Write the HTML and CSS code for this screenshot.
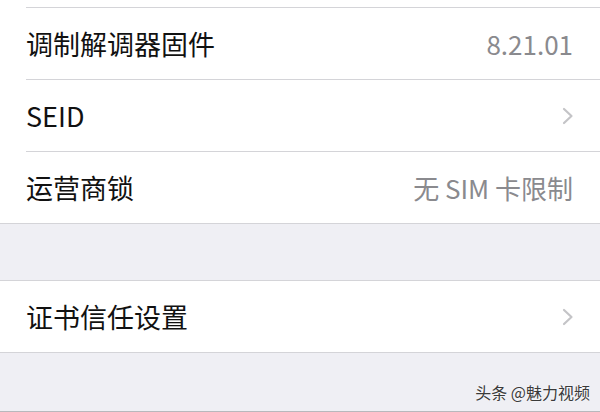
FILE: index.html
```html
<!DOCTYPE html>
<html lang="zh-CN">
<head>
    <meta charset="UTF-8">
    <meta name="viewport" content="width=device-width, initial-scale=1.0">
    <title>关于本机</title>
    <link rel="stylesheet" href="styles.css">
</head>
<body>
    <div class="group">
        <div class="row">
            <div class="cell cell-top"></div>
        </div>
        <div class="row">
            <div class="cell">
                <span class="label">调制解调器固件</span>
                <span class="value">8.21.01</span>
            </div>
        </div>
        <div class="row">
            <div class="cell">
                <span class="label">SEID</span>
                <svg class="chevron" width="12" height="18" viewBox="0 0 12 18">
                    <path d="M2 2 L9.5 9 L2 16" fill="none" stroke="#c4c4c7" stroke-width="2.2" stroke-linecap="round" stroke-linejoin="round"/>
                </svg>
            </div>
        </div>
        <div class="row">
            <div class="cell last">
                <span class="label">运营商锁</span>
                <span class="value">无 SIM 卡限制</span>
            </div>
        </div>
    </div>

    <div class="spacer"></div>

    <div class="group">
        <div class="row">
            <div class="cell last">
                <span class="label">证书信任设置</span>
                <svg class="chevron" width="12" height="18" viewBox="0 0 12 18">
                    <path d="M2 2 L9.5 9 L2 16" fill="none" stroke="#c4c4c7" stroke-width="2.2" stroke-linecap="round" stroke-linejoin="round"/>
                </svg>
            </div>
        </div>
    </div>

    <!-- footer with watermark -->
    <div class="footer">
        <span class="watermark">头条 @魅力视频</span>
    </div>
</body>
</html>
```

FILE: styles.css
```css
body {
    margin: 0;
    background-color: #efeff4;
    font-family: "Noto Sans CJK SC", "Noto Sans", sans-serif;
}
.group {
    background: white;
    border-bottom: 1px solid #d4d4d8;
}
.row {
    padding-left: 26px;
}
.cell {
    height: 71px;
    padding-right: 27px;
    display: flex;
    align-items: center;
    justify-content: space-between;
    border-bottom: 1px solid #d4d4d8;
}
.cell-top {
    height: 7px;
}
.cell.last {
    border-bottom: none;
}
.label {
    font-size: 27px;
    color: #111;
}
.value {
    font-size: 26px;
    color: #8a8a8e;
}
.chevron {
    margin-right: -1px;
}
.spacer {
    height: 56px;
    border-bottom: 1px solid #d4d4d8;
}
.footer {
    height: 58px;
    display: flex;
    justify-content: flex-end;
    align-items: flex-end;
    padding-right: 10px;
    border-bottom: 1px solid #b8b8bc;
}
.watermark {
    font-size: 16px;
    color: #3a3a3a;
    padding-bottom: 7px;
    text-shadow: 0 0 2px #fff;
}
```
